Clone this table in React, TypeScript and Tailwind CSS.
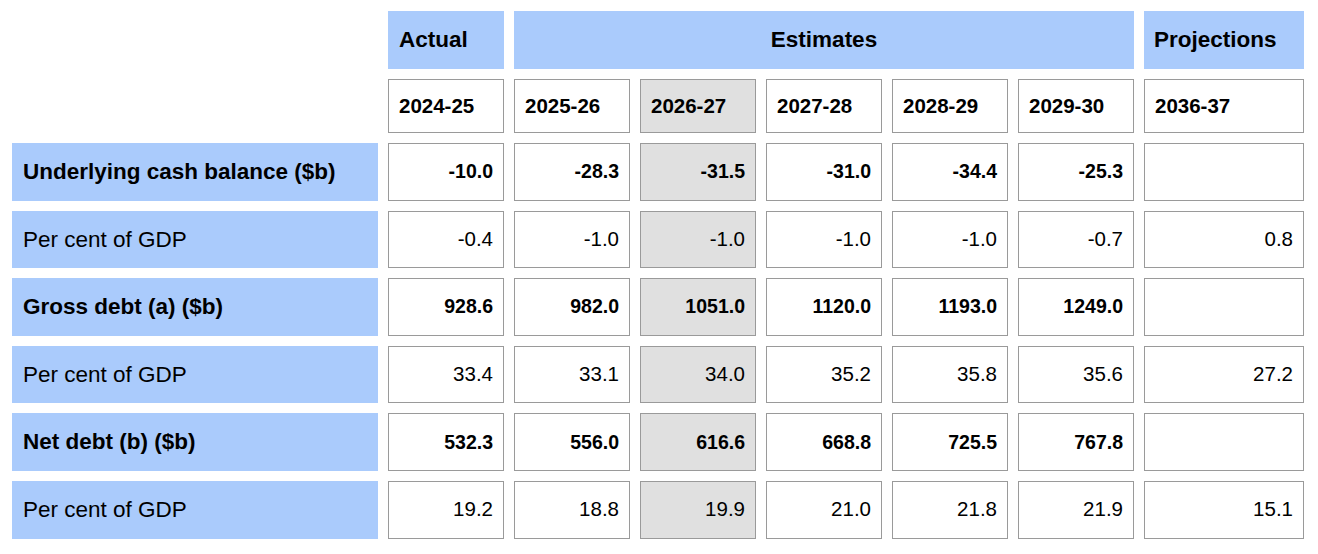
const years = ["2024-25", "2025-26", "2026-27", "2027-28", "2028-29", "2029-30", "2036-37"];

type Row = { label: string; bold: boolean; values: string[] };

const rows: Row[] = [
  { label: "Underlying cash balance ($b)", bold: true, values: ["-10.0", "-28.3", "-31.5", "-31.0", "-34.4", "-25.3", ""] },
  { label: "Per cent of GDP", bold: false, values: ["-0.4", "-1.0", "-1.0", "-1.0", "-1.0", "-0.7", "0.8"] },
  { label: "Gross debt (a) ($b)", bold: true, values: ["928.6", "982.0", "1051.0", "1120.0", "1193.0", "1249.0", ""] },
  { label: "Per cent of GDP", bold: false, values: ["33.4", "33.1", "34.0", "35.2", "35.8", "35.6", "27.2"] },
  { label: "Net debt (b) ($b)", bold: true, values: ["532.3", "556.0", "616.6", "668.8", "725.5", "767.8", ""] },
  { label: "Per cent of GDP", bold: false, values: ["19.2", "18.8", "19.9", "21.0", "21.8", "21.9", "15.1"] },
];

function cellBg(i: number) {
  return i === 2 ? "bg-[#e0e0e0]" : "bg-white";
}

export default function App() {
  return (
    <div className="w-[1318px] h-[554px] bg-white text-black font-['Liberation_Sans',Arial,sans-serif]">
      <div className="grid grid-cols-[366px_repeat(6,116px)_160px] grid-rows-[58px_54px_repeat(6,57.6px)] gap-[10px] pl-[12px] pt-[11px]">
        {/* group headers */}
        <div />
        <div className="bg-[#aacbfc] flex items-center px-[11px] text-[22.5px] font-bold">Actual</div>
        <div className="col-span-5 bg-[#aacbfc] flex items-center justify-center text-[22.5px] font-bold">Estimates</div>
        <div className="bg-[#aacbfc] flex items-center px-[10px] text-[22.5px] font-bold">Projections</div>

        {/* years */}
        <div />
        {years.map((y, i) => (
          <div
            key={y}
            className={`${cellBg(i)} border border-[#9a9a9a] flex items-center px-[10px] text-[20.5px] font-bold`}
          >
            {y}
          </div>
        ))}

        {rows.map((r, ri) => (
          <>
            <div
              key={`l${ri}`}
              className={`bg-[#aacbfc] flex items-center px-[11px] text-[22.5px] ${r.bold ? "font-bold" : ""}`}
            >
              {r.label}
            </div>
            {r.values.map((v, i) => (
              <div
                key={`v${ri}-${i}`}
                className={`${cellBg(i)} border border-[#9a9a9a] flex items-center justify-end px-[10px] ${r.bold ? "font-bold text-[19.5px]" : "text-[20.5px]"}`}
              >
                {v}
              </div>
            ))}
          </>
        ))}
      </div>
    </div>
  );
}
